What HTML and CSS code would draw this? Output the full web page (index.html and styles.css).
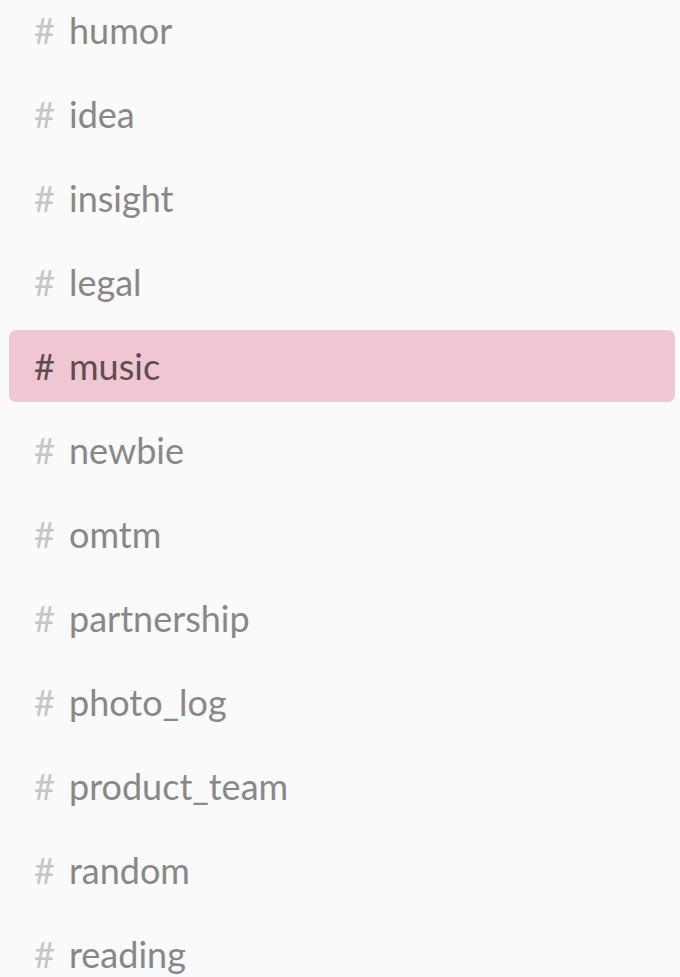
FILE: index.html
```html
<!DOCTYPE html>
<html>
<head>
<meta charset="utf-8">
<link rel="stylesheet" href="styles.css">
</head>
<body>
<ul class="channels">
  <li class="channel"><span class="hash">#</span><span class="name">humor</span></li>
  <li class="channel"><span class="hash">#</span><span class="name">idea</span></li>
  <li class="channel"><span class="hash">#</span><span class="name">insight</span></li>
  <li class="channel"><span class="hash">#</span><span class="name">legal</span></li>
  <li class="channel active"><span class="hash">#</span><span class="name">music</span></li>
  <li class="channel"><span class="hash">#</span><span class="name">newbie</span></li>
  <li class="channel"><span class="hash">#</span><span class="name">omtm</span></li>
  <li class="channel"><span class="hash">#</span><span class="name">partnership</span></li>
  <li class="channel"><span class="hash">#</span><span class="name">photo_log</span></li>
  <li class="channel"><span class="hash">#</span><span class="name">product_team</span></li>
  <li class="channel"><span class="hash">#</span><span class="name">random</span></li>
  <li class="channel"><span class="hash">#</span><span class="name">reading</span></li>
</ul>
</body>
</html>
```

FILE: styles.css
```css
html, body {
  margin: 0;
  padding: 0;
  background: #fafafa;
  overflow: hidden;
}
.channels {
  list-style: none;
  margin: -6px 0 0 0;
  padding: 0;
  display: flex;
  flex-direction: column;
  gap: 12px;
  font-family: Lato, "Open Sans", sans-serif;
}
.channel {
  height: 72px;
  margin: 0 5px 0 9px;
  padding-left: 25px;
  display: flex;
  align-items: center;
  border-radius: 7px;
  font-size: 36px;
  color: #888888;
}
.hash {
  width: 35px;
  flex: none;
  color: #c6c6c6;
}
.channel.active {
  background: #f0c6d3;
  color: #5b4e54;
}
.channel.active .hash {
  color: #5b4e54;
}
```
